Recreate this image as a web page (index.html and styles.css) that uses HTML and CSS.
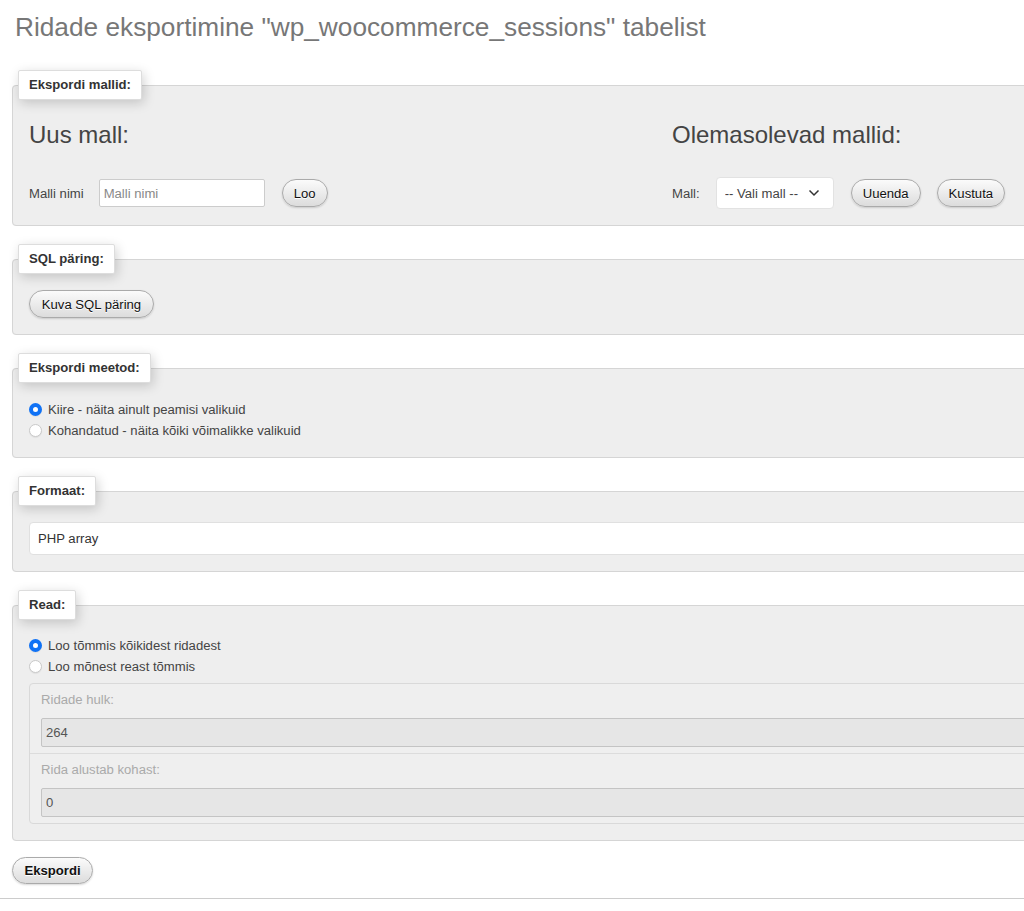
FILE: index.html
```html
<!DOCTYPE html>
<html lang="et">
<head>
<meta charset="utf-8">
<title>Ridade eksportimine</title>
<link rel="stylesheet" href="styles.css">
</head>
<body>
<div class="page">
  <h2 class="page-title">Ridade eksportimine "wp_woocommerce_sessions" tabelist</h2>

  <fieldset class="box box-first">
    <legend class="box-legend">Ekspordi mallid:</legend>
    <div class="tpl-cols">
      <div class="tpl-col tpl-col-new">
        <h3 class="tpl-heading">Uus mall:</h3>
        <div class="tpl-row">
          <label class="tpl-label">Malli nimi</label>
          <input class="text-input" type="text" placeholder="Malli nimi">
          <button class="btn" type="button">Loo</button>
        </div>
      </div>
      <div class="tpl-col">
        <h3 class="tpl-heading">Olemasolevad mallid:</h3>
        <div class="tpl-row">
          <label class="tpl-label">Mall:</label>
          <span class="select-wrap">
            <select class="tpl-select"><option>-- Vali mall --</option></select>
            <svg class="chev" width="12" height="8" viewBox="0 0 12 8"><polyline points="1.5,1.5 6,6 10.5,1.5" fill="none" stroke="#333" stroke-width="1.5"/></svg>
          </span>
          <button class="btn" type="button">Uuenda</button>
          <button class="btn" type="button">Kustuta</button>
        </div>
      </div>
    </div>
  </fieldset>

  <fieldset class="box">
    <legend class="box-legend">SQL päring:</legend>
    <button class="btn btn-sql" type="button">Kuva SQL päring</button>
  </fieldset>

  <fieldset class="box">
    <legend class="box-legend">Ekspordi meetod:</legend>
    <div class="radio-list">
      <label class="radio-row"><input class="radio" type="radio" name="method" checked>Kiire - näita ainult peamisi valikuid</label>
      <label class="radio-row"><input class="radio" type="radio" name="method">Kohandatud - näita kõiki võimalikke valikuid</label>
    </div>
  </fieldset>

  <fieldset class="box">
    <legend class="box-legend">Formaat:</legend>
    <select class="format-select"><option>PHP array</option></select>
  </fieldset>

  <fieldset class="box">
    <legend class="box-legend">Read:</legend>
    <div class="radio-list radio-list-rows">
      <label class="radio-row"><input class="radio" type="radio" name="rows" checked>Loo tõmmis kõikidest ridadest</label>
      <label class="radio-row"><input class="radio" type="radio" name="rows">Loo mõnest reast tõmmis</label>
    </div>
    <ul class="rows-opts">
      <li class="rows-item">
        <label class="rows-label">Ridade hulk:</label>
        <input class="rows-input" type="text" value="264" disabled>
      </li>
      <li class="rows-item">
        <label class="rows-label">Rida alustab kohast:</label>
        <input class="rows-input" type="text" value="0" disabled>
      </li>
    </ul>
  </fieldset>

  <button class="btn btn-export" type="button">Ekspordi</button>
</div>
<div class="bottom-rule"></div>
</body>
</html>
```

FILE: styles.css
```css
html {
  overflow-x: hidden;
}

body {
  margin: 0;
  font-family: "Liberation Sans", Arial, sans-serif;
  font-size: 13.12px;
  color: #444;
  background: #fff;
}

.page {
  padding-left: 12px;
}

.page-title {
  margin: 12px 0 0 3px;
  font-size: 26.24px;
  line-height: 30px;
  font-weight: normal;
  color: #777;
  text-shadow: 0 1px 0 #fff;
  white-space: nowrap;
}

.box {
  box-sizing: border-box;
  width: 1330px;
  margin: 18px 0 0;
  padding: 0 16px 16px;
  background: #eee;
  border: 1px solid #d5d5d5;
  border-radius: 4px;
  min-inline-size: 0;
}

.box-first {
  margin-top: 28px;
}

.box-legend {
  margin-left: -11px;
  padding: 6px 10px;
  line-height: 16px;
  font-weight: bold;
  color: #333;
  background: #fff;
  border: 1px solid #ddd;
  border-radius: 2px;
  box-shadow: 2px 3px 12px rgba(0, 0, 0, 0.18);
}

.tpl-cols {
  display: flex;
}

.tpl-col-new {
  width: 643px;
  flex: none;
}

.tpl-heading {
  margin: 21px 0 0;
  font-size: 24px;
  line-height: 28px;
  font-weight: normal;
  color: #444;
  white-space: nowrap;
}

.tpl-row {
  display: flex;
  align-items: center;
  height: 32px;
  margin-top: 28px;
  gap: 16px;
  white-space: nowrap;
}

.tpl-label {
  color: #444;
}

.text-input {
  box-sizing: border-box;
  width: 166px;
  height: 28px;
  padding: 0 4px;
  font-family: inherit;
  font-size: 13.12px;
  color: #444;
  background: #fff;
  border: 1px solid #ccc;
  border-radius: 2px;
  margin-left: -1px;
  margin-right: 1px;
}

.text-input::placeholder {
  color: #888;
}

.btn {
  box-sizing: border-box;
  height: 28px;
  padding: 0 11px;
  font-family: inherit;
  font-size: 13.12px;
  color: #111;
  text-shadow: 0 1px 0 #fff;
  background: linear-gradient(#fbfbfb, #dcdcdc);
  border: 1px solid #aaa;
  border-radius: 20px;
  box-shadow: 0 1px 2px rgba(0, 0, 0, 0.15);
  white-space: nowrap;
}

.select-wrap {
  position: relative;
  display: inline-block;
  margin-right: 1px;
}

.tpl-select {
  display: block;
  box-sizing: border-box;
  width: 118px;
  height: 32px;
  padding: 0 8px;
  font-family: inherit;
  font-size: 13.12px;
  color: #444;
  background: #fff;
  border: 1px solid #e2e2e2;
  border-radius: 4px;
  appearance: none;
  -webkit-appearance: none;
}

.chev {
  position: absolute;
  right: 14px;
  top: 12px;
  pointer-events: none;
}

.btn-sql {
  display: block;
  margin-top: 16px;
  width: 125px;
}

.radio-list {
  margin-top: 16px;
}

.radio-list-rows {
  margin-top: 15px;
}

.radio-row {
  display: flex;
  align-items: center;
  height: 21px;
  color: #444;
  white-space: nowrap;
}

.radio {
  box-sizing: border-box;
  width: 13px;
  height: 13px;
  margin: 0 6px 0 0;
  border: 1px solid #c9c9c9;
  border-radius: 50%;
  background: #fff;
  appearance: none;
  -webkit-appearance: none;
  box-shadow: 0 1px 1px rgba(0, 0, 0, 0.06);
}

.radio:checked {
  border: 4px solid #1072f5;
}

.format-select {
  display: block;
  box-sizing: border-box;
  width: 100%;
  height: 33px;
  margin-top: 16px;
  padding: 0 8px;
  font-family: inherit;
  font-size: 13.12px;
  color: #333;
  background: #fff;
  border: 1px solid #e0e0e0;
  border-radius: 4px;
  appearance: none;
  -webkit-appearance: none;
}

.rows-opts {
  list-style: none;
  margin: 6px 0 0;
  padding: 0;
  border: 1px solid #d9d9d9;
  border-radius: 4px;
  background: #efefef;
}

.rows-item {
  padding: 8px 11px 6px;
}

.rows-item + .rows-item {
  border-top: 1px solid #dcdcdc;
}

.rows-label {
  display: block;
  line-height: 16px;
  margin-bottom: 10px;
  color: #aaa;
}

.rows-input {
  display: block;
  box-sizing: border-box;
  width: 100%;
  height: 29px;
  padding: 0 4px;
  font-family: inherit;
  font-size: 13.12px;
  color: #555;
  background: #e6e6e6;
  border: 1px solid #c4c4c4;
  border-radius: 2px;
}

.btn-export {
  display: block;
  margin-top: 16px;
  font-weight: bold;
  height: 27px;
  width: 81px;
}

.bottom-rule {
  margin-top: 14px;
  border-top: 1px solid #ccc;
}
```
